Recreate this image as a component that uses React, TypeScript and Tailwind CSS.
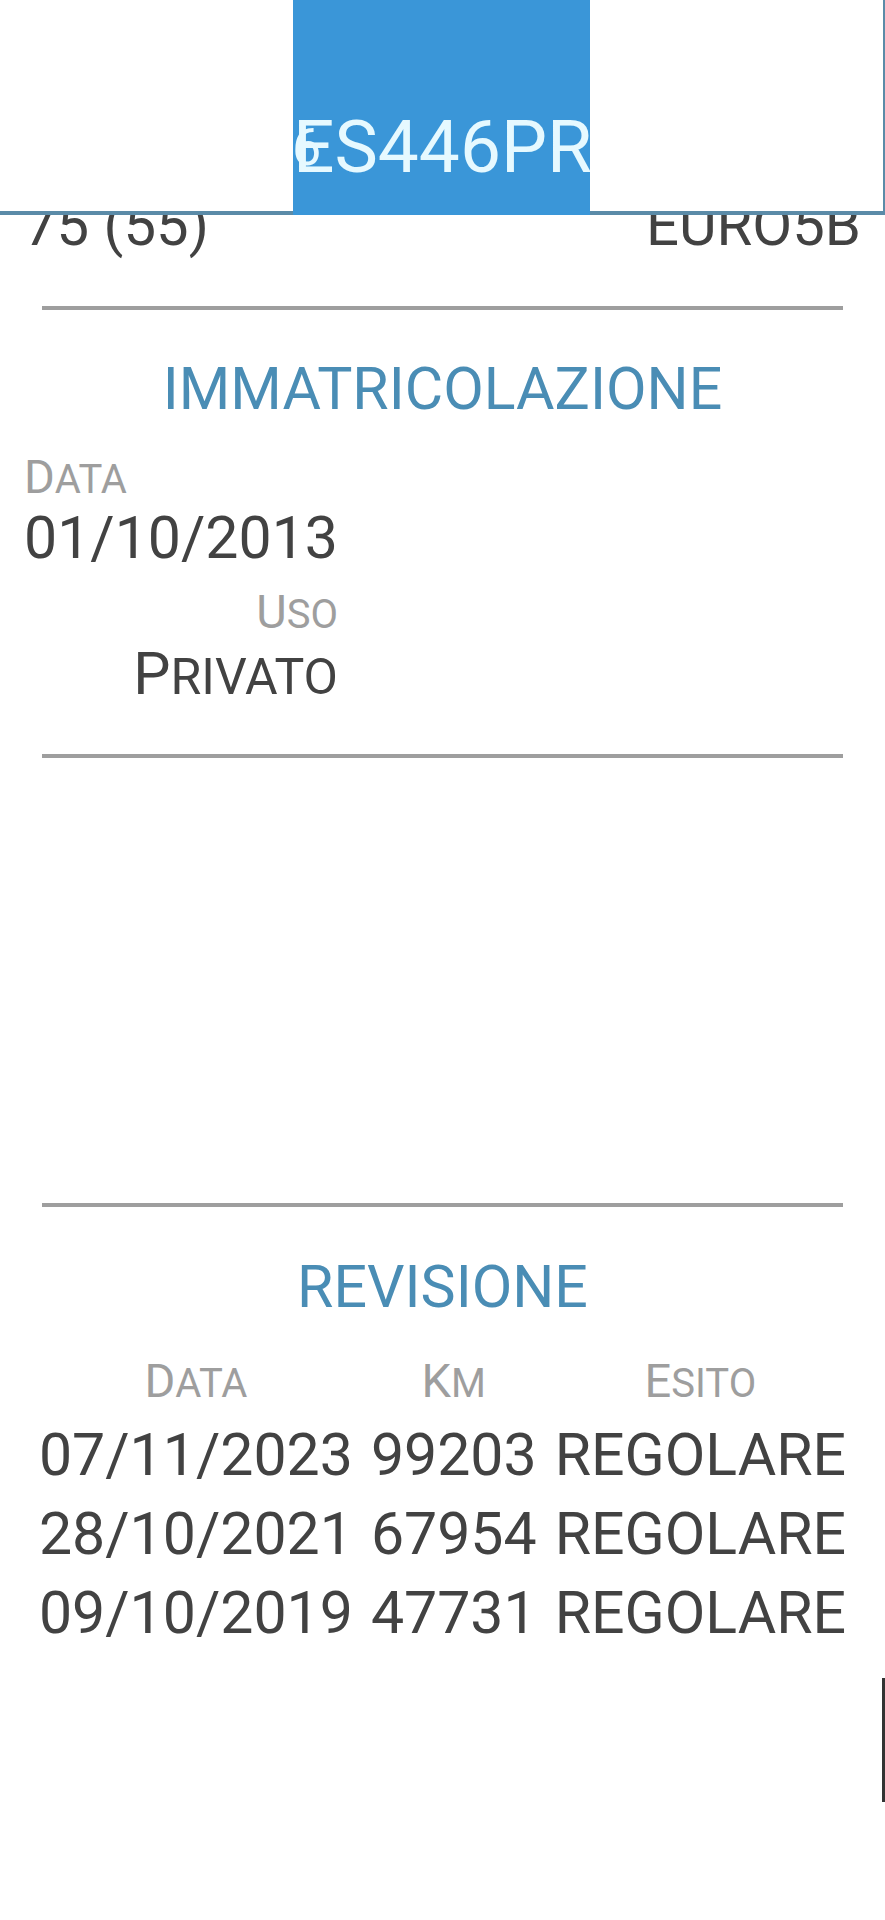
import React from 'react';

const revisioni = [
  { data: '07/11/2023', km: '99203', esito: 'REGOLARE' },
  { data: '28/10/2021', km: '67954', esito: 'REGOLARE' },
  { data: '09/10/2019', km: '47731', esito: 'REGOLARE' },
];

// small caps label: first letter big, rest smaller caps
function Label({ text, className = '' }: { text: string; className?: string }) {
  return (
    <div className={`text-[47px] leading-[54px] text-[#9e9e9e] ${className}`}>
      <span>{text[0].toUpperCase()}</span>
      <span className="text-[40px] leading-[40px] uppercase">{text.slice(1)}</span>
    </div>
  );
}

function Divider({ className = '' }: { className?: string }) {
  return <div className={`mx-[18px] h-1 bg-[#9e9e9e] ${className}`} />;
}

export default function App() {
  return (
    <div className="relative min-h-[1920px] bg-white font-['Roboto',sans-serif] text-[#424242]">
      {/* Header with plate */}
      <div className="fixed inset-x-0 top-0 z-10 flex h-[215px]">
        <div className="flex-1 border-b-4 border-[#5b8ba8] bg-white" />
        <div className="relative w-[297px] overflow-hidden bg-[#3a96d8] pt-[105px]">
          <span className="absolute left-[-1px] top-[118px] text-[52px] leading-[60px] text-[#e6f9ff]">6</span>
          <div className="whitespace-nowrap text-[73px] leading-[84px] text-[#e6f9ff]">ES446PR</div>
        </div>
        <div className="flex-1 border-b-4 border-r-2 border-[#5b8ba8] bg-white" />
      </div>

      <main className="px-6 pt-[191px]">
        <div className="flex justify-between text-[58px] leading-[68px]">
          <span>75 (55)</span>
          <span>EURO5B</span>
        </div>

        <Divider className="mt-[47px]" />

        {/* Immatricolazione */}
        <h2 className="mt-[45px] text-center text-[59px] leading-[68px] text-[#4a8db5]">IMMATRICOLAZIONE</h2>
        <div className="flex w-fit flex-col">
          <Label text="Data" className="mt-[27px]" />
          <div className="text-[59px] leading-[68px]">01/10/2013</div>
          <Label text="Uso" className="mt-[13px] text-right" />
          <div className="mt-px text-right text-[59px] leading-[68px]">
            <span>P</span>
            <span className="text-[50px] leading-[50px]">RIVATO</span>
          </div>
        </div>

        <Divider className="mt-[46px]" />
        <Divider className="mt-[445px]" />

        {/* Revisione */}
        <h2 className="mt-[46px] text-center text-[59px] leading-[68px] text-[#4a8db5]">REVISIONE</h2>
        <div className="mt-[33px] grid grid-cols-[auto_auto_auto] justify-center gap-x-[18px] text-center">
          <Label text="Data" />
          <Label text="Km" />
          <Label text="Esito" />
          {revisioni.map((r, i) => (
            <React.Fragment key={i}>
              <div className={`text-[59px] leading-[79px] ${i === 0 ? 'mt-[7px]' : ''}`}>{r.data}</div>
              <div className={`text-[59px] leading-[79px] ${i === 0 ? 'mt-[7px]' : ''}`}>{r.km}</div>
              <div className={`text-[59px] leading-[79px] ${i === 0 ? 'mt-[7px]' : ''}`}>{r.esito}</div>
            </React.Fragment>
          ))}
        </div>
      </main>

      {/* scroll indicator */}
      <div className="absolute right-0 top-[1678px] h-[124px] w-[3px] bg-[#333]" />
    </div>
  );
}
